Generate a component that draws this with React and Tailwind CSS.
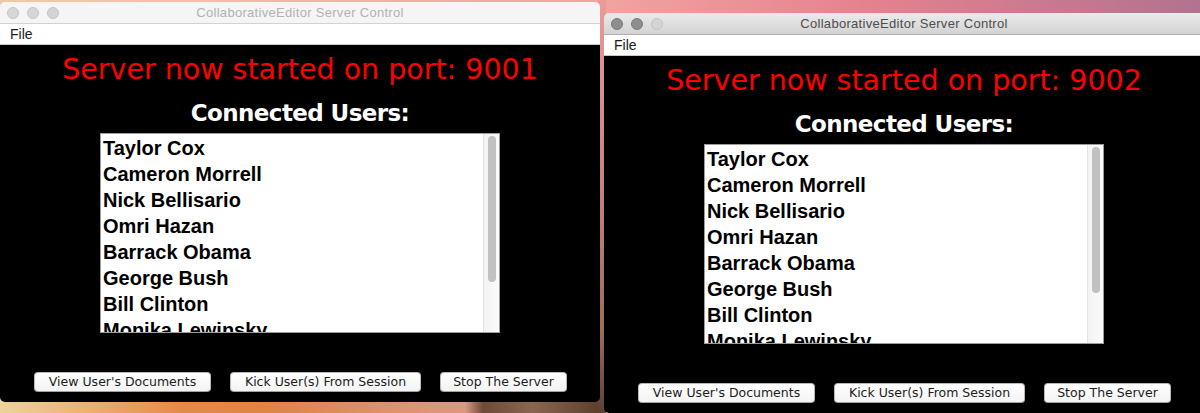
import React from "react";

const users = [
  "Taylor Cox",
  "Cameron Morrell",
  "Nick Bellisario",
  "Omri Hazan",
  "Barrack Obama",
  "George Bush",
  "Bill Clinton",
  "Monika Lewinsky",
];

function Lights({ active }) {
  return (
    <div className="flex items-center gap-[8px] pl-[7px]">
      <span
        className={
          "block w-[12px] h-[12px] rounded-full border " +
          (active ? "bg-[#8e8e8e] border-[#7a7a7a]" : "bg-[#d6d6d6] border-[#c6c6c6]")
        }
      />
      <span
        className={
          "block w-[12px] h-[12px] rounded-full border " +
          (active ? "bg-[#8e8e8e] border-[#7a7a7a]" : "bg-[#d6d6d6] border-[#c6c6c6]")
        }
      />
      <span className="block w-[12px] h-[12px] rounded-full border bg-[#d4d4d4] border-[#c4c4c4]" />
    </div>
  );
}

function ServerWindow({ port, active, className }) {
  return (
    <div
      className={
        "absolute w-[600px] h-[400px] flex flex-col rounded-[5px] overflow-hidden " + className
      }
    >
      <div
        className={
          "relative h-[22px] shrink-0 flex items-center border-b " +
          (active
            ? "bg-[linear-gradient(180deg,#ebebeb,#d3d3d3)] border-[#b1b1b1]"
            : "bg-[#f5f5f5] border-[#d2d2d2]")
        }
      >
        <Lights active={active} />
        <div
          className={
            "absolute inset-0 flex items-center justify-center text-[13px] tracking-[0.3px] font-['Liberation_Sans',Arial,sans-serif] " +
            (active ? "text-[#4c4c4c]" : "text-[#b2b2b2]")
          }
        >
          CollaborativeEditor Server Control
        </div>
      </div>
      <div className="h-[21px] shrink-0 bg-white border-b border-[#c9c9c9] flex items-center pl-[10px] text-[14px] text-[#1a1a1a] font-['Liberation_Sans',Arial,sans-serif]">
        File
      </div>
      <div className="flex-1 bg-black flex flex-col items-center pt-[8px] font-['DejaVu_Sans',sans-serif]">
        <div className="h-[34px] leading-[34px] text-[28.5px] text-[#ff0000] whitespace-nowrap">
          Server now started on port: {port}
        </div>
        <div className="mt-[11px] h-[30px] leading-[30px] text-[23px] tracking-[-0.6px] font-bold text-white whitespace-nowrap">
          Connected Users:
        </div>
        <div className="mt-[5px] w-[400px] h-[200px] bg-white border border-[#9c9c9c] flex overflow-hidden">
          <div className="flex-1 pt-[1px] pl-[2px] overflow-hidden">
            {users.map((u) => (
              <div
                key={u}
                className="h-[26px] leading-[26px] text-[20px] font-bold text-black whitespace-nowrap font-['Liberation_Sans',Arial,sans-serif]"
              >
                {u}
              </div>
            ))}
          </div>
          <div className="w-[16px] shrink-0 bg-[linear-gradient(90deg,#f3f3f3,#fbfbfb)] border-l border-[#e3e3e3] pt-[2px] flex justify-center">
            <div className="w-[8px] h-[146px] rounded-full bg-[#c1c1c1]" />
          </div>
        </div>
        <div className="mt-[39px] flex gap-[19px] pl-[1px]">
          <Btn w="w-[177px]">View User's Documents</Btn>
          <Btn w="w-[191px]">Kick User(s) From Session</Btn>
          <Btn w="w-[127px]">Stop The Server</Btn>
        </div>
      </div>
    </div>
  );
}

function Btn({ w, children }) {
  return (
    <div
      className={
        w +
        " h-[20px] rounded-[4px] bg-[linear-gradient(180deg,#ffffff,#f3f3f3)] border border-[#b9b9b9] border-b-[#a2a2a2] flex items-center justify-center text-[12.5px] text-[#1c1c1c] font-['DejaVu_Sans',sans-serif] whitespace-nowrap"
      }
    >
      {children}
    </div>
  );
}

export default function App() {
  return (
    <div className="relative w-[1200px] h-[413px] overflow-hidden bg-[linear-gradient(90deg,#f3c9a9_0%,#f2a4a0_50%,#e5828f_72%,#b27290_100%)]">
      <div className="absolute left-0 bottom-0 w-[604px] h-[14px] bg-[linear-gradient(90deg,#eed39c_0%,#eab070_15%,#e48a48_30%,#e08446_45%,#dc9270_65%,#d89a80_77%,#6f4a38_80%,#8a6650_88%,#5a3c2c_100%)]" />
      <div className="absolute left-[598px] top-[0px] w-[8px] h-[413px] bg-[linear-gradient(180deg,#ec9a98_0%,#c0807a_50%,#9a6e5c_80%,#5a4030_100%)]" />
      <ServerWindow port="9001" active={false} className="left-0 top-[2px]" />
      <ServerWindow port="9002" active={true} className="left-[604px] top-[13px]" />
    </div>
  );
}
